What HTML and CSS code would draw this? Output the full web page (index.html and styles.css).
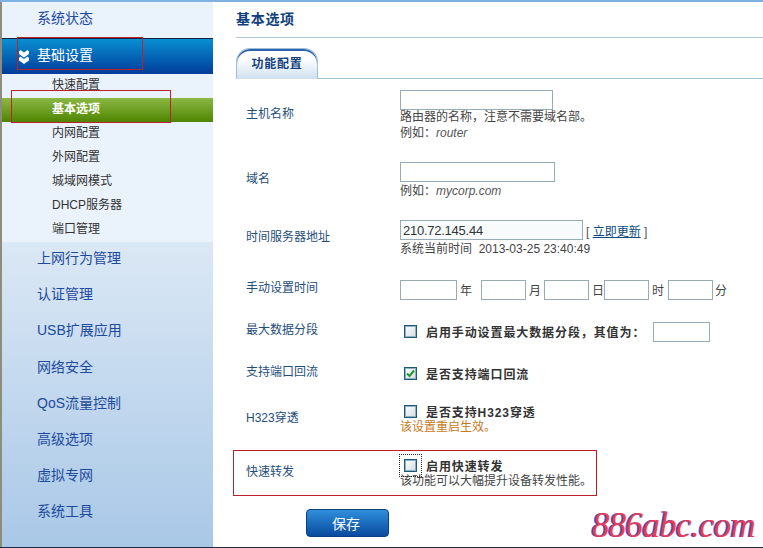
FILE: index.html
```html
<!DOCTYPE html>
<html lang="zh-CN">
<head>
    <meta charset="UTF-8">
    <title>基本选项</title>
    <link rel="stylesheet" href="styles.css">
</head>
<body>
    <div class="page">
        <div class="sidebar">
            <a class="nav-top">系统状态</a>
            <a class="nav-active">
                <svg class="chevrons" width="10" height="14" viewBox="0 0 10 14">
                    <path d="M0 1.5 1.5 0 5 2.5 8.500 0 10 1.500V4L5 7.500 0 4Z M0 8 1.500 6.500 5 9 8.500 6.500 10 8V10.500L5 14 0 10.500Z" fill="#fff"/>
                </svg>
                基础设置
            </a>
            <div class="subnav">
                <a>快速配置</a>
                <a class="current">基本选项</a>
                <a>内网配置</a>
                <a>外网配置</a>
                <a>城域网模式</a>
                <a>DHCP服务器</a>
                <a>端口管理</a>
            </div>
            <div class="groups">
                <a>上网行为管理</a>
                <a>认证管理</a>
                <a>USB扩展应用</a>
                <a>网络安全</a>
                <a>QoS流量控制</a>
                <a>高级选项</a>
                <a>虚拟专网</a>
                <a>系统工具</a>
            </div>
        </div>

        <div class="main">
            <h1>基本选项</h1>
            <div class="tabs"><span class="tab">功能配置</span></div>

            <form class="form">
                <div class="row row-host">
                    <label>主机名称</label>
                    <div>
                        <input class="input w153" type="text">
                        <div class="hint">路由器的名称，注意不需要域名部。</div>
                        <div class="hint">例如：<i>router</i></div>
                    </div>
                </div>
                <div class="row row-domain">
                    <label>域名</label>
                    <div>
                        <input class="input w155" type="text">
                        <div class="hint">例如：<i>mycorp.com</i></div>
                    </div>
                </div>
                <div class="row row-time">
                    <label>时间服务器地址</label>
                    <div>
                        <div class="line">
                            <input class="input w183 filled" type="text" value="210.72.145.44">
                            <span class="update">[ <a href="#">立即更新</a> ]</span>
                        </div>
                        <div class="hint">系统当前时间&nbsp; 2013-03-25 23:40:49</div>
                    </div>
                </div>
                <div class="row row-manual">
                    <label>手动设置时间</label>
                    <div class="line date">
                        <input class="input w57" type="text"><span class="unit u-year">年</span>
                        <input class="input w45" type="text"><span class="unit u-month">月</span>
                        <input class="input w45" type="text"><span class="unit u-day">日</span>
                        <input class="input w45" type="text"><span class="unit u-hour">时</span>
                        <input class="input w45" type="text"><span class="unit u-min">分</span>
                    </div>
                </div>
                <div class="row row-mss">
                    <label>最大数据分段</label>
                    <div class="line check">
                        <span class="box"></span>
                        <b>启用手动设置最大数据分段，其值为：</b>
                        <input class="input w57 mss" type="text">
                    </div>
                </div>
                <div class="row row-loop">
                    <label>支持端口回流</label>
                    <div class="line check">
                        <span class="box">
                            <svg width="9" height="9" viewBox="0 0 9 9"><path d="M1 4.500 3.500 7 8 1.500" fill="none" stroke="#1f9a2e" stroke-width="2"/></svg>
                        </span>
                        <b>是否支持端口回流</b>
                    </div>
                </div>
                <div class="row row-h323">
                    <label>H323穿透</label>
                    <div>
                        <div class="line check">
                            <span class="box"></span>
                            <b>是否支持H323穿透</b>
                        </div>
                        <div class="hint orange">该设置重启生效。</div>
                    </div>
                </div>
                <div class="row row-fast">
                    <label>快速转发</label>
                    <div>
                        <div class="line check">
                            <span class="box focused"></span>
                            <b>启用快速转发</b>
                        </div>
                        <div class="hint">该功能可以大幅提升设备转发性能。</div>
                    </div>
                </div>
                <button class="save" type="button">保存</button>
            </form>
        </div>

        <!-- red marks and watermark sit on top of the screenshot -->
        <div class="mark mark-nav"></div>
        <div class="mark mark-sub"></div>
        <div class="mark mark-row"></div>
        <div class="watermark">886abc.com</div>
    </div>
</body>
</html>
```

FILE: styles.css
```css
html, body {
    margin: 0;
    padding: 0;
}
body {
    font-family: "Liberation Sans", "Noto Sans CJK SC", sans-serif;
    font-size: 12px;
    color: #444;
    background-color: #fff;
}
.page {
    position: relative;
    display: flex;
    box-sizing: border-box;
    width: 763px;
    height: 548px;
    overflow: hidden;
    border-top: 2px solid #7fb2e2;
    border-bottom: 1px solid #1f2a44;
}

/* sidebar */
.sidebar {
    display: flex;
    flex-direction: column;
    flex: none;
    width: 211px;
    border-left: 2px solid #8e8c7c;
    background-color: #eaf2fb;
}
.sidebar a {
    display: block;
}
.nav-top {
    height: 36px;
    padding-left: 35px;
    font-size: 14px;
    line-height: 33px;
    color: #1d4a9c;
}
.nav-active {
    position: relative;
    height: 35px;
    padding-left: 35px;
    border-top: 1px solid #10243f;
    font-size: 14px;
    line-height: 32px;
    color: #fff;
    background: linear-gradient(#0a8fd2, #003c9a);
}
.chevrons {
    position: absolute;
    left: 17px;
    top: 11px;
}
.subnav a {
    height: 24px;
    padding-left: 50px;
    line-height: 23px;
    color: #333;
}
.subnav a.current {
    font-weight: bold;
    color: #fff;
    background: linear-gradient(#8cb845, #4f8500);
}
.groups {
    flex: 1;
    background: linear-gradient(#dbe8f5, #a9c8e7);
}
.groups a {
    height: 36.2px;
    padding-left: 35px;
    font-size: 14px;
    line-height: 33px;
    color: #1d4a9c;
}

/* main area */
.main {
    flex: 1;
    padding: 0 0 0 23px;
}
h1 {
    height: 35px;
    margin: 0;
    border-bottom: 1px solid #b4c6d8;
    font-size: 14px;
    line-height: 34px;
    letter-spacing: 0.7px;
    color: #10407c;
}
.tabs {
    display: flex;
    height: 30px;
    margin-top: 10px;
    border-bottom: 1px solid #a9c3d6;
}
.tab {
    box-sizing: border-box;
    width: 82px;
    height: 31px;
    border: 1px solid #9cc0da;
    border-bottom: none;
    border-radius: 14px 14px 0 0;
    box-shadow: inset 0 2px 0 #2c62ac;
    font-size: 12px;
    font-weight: bold;
    line-height: 30px;
    letter-spacing: 0.8px;
    text-align: center;
    color: #10407c;
    background: linear-gradient(#fff 30%, #cfe0ef);
}
.form {
    padding: 11px 0 0 10px;
}
.row {
    display: grid;
    grid-template-columns: 154px 1fr;
    align-items: center;
}
.row label {
    margin-bottom: 6px;
    color: #1f4e79;
}
.row-host { height: 49px; }
.row-domain { height: 35px; margin-top: 23px; }
.row-time { height: 36px; margin-top: 23px; }
.row-manual { height: 20px; margin-top: 22px; }
.row-mss { height: 20px; margin-top: 22px; }
.row-loop { height: 18px; margin-top: 22px; }
.row-h323 { height: 29px; margin-top: 23px; }
.row-fast { height: 32px; margin-top: 25px; }

.row-host .input + .hint { margin-top: -1px; }
.row-domain .hint, .row-time .hint { margin-top: 1px; }
.row-h323 .hint, .row-fast .hint { margin-top: -1px; }

.input {
    display: block;
    box-sizing: border-box;
    height: 20px;
    margin: 0;
    padding: 0 2px;
    border: 1px solid #98acb4;
    font-family: inherit;
    font-size: 13px;
    letter-spacing: -0.25px;
    color: #333;
    background-color: #fff;
}
.filled {
    background-color: #f8fbfc;
}
.w45 { width: 45px; }
.w57 { width: 57px; }
.w153 { width: 153px; }
.w155 { width: 155px; }
.w183 { width: 183px; }
.hint {
    height: 16px;
    line-height: 16px;
    white-space: nowrap;
}
.hint i {
    color: #555;
}
.orange {
    color: #c8791c;
}
.line {
    display: flex;
    align-items: center;
    white-space: nowrap;
}
.update {
    margin-left: 3px;
    color: #555;
}
.update a {
    color: #0b4a80;
}
.unit {
    margin-left: 3px;
}
.u-year { margin-right: 9px; }
.u-month { margin-right: 3px; }
.u-hour { margin-right: 4px; }
.u-min { margin-left: 2px; }
.check b {
    margin-left: 9px;
    letter-spacing: 0.9px;
    color: #333;
}
.box {
    position: relative;
    display: flex;
    align-items: center;
    justify-content: center;
    box-sizing: border-box;
    flex: none;
    width: 13px;
    height: 13px;
    margin-left: 4px;
    border: 1px solid #1d5a78;
    box-shadow: inset 0 0 0 1px #8fb0c0;
    background: linear-gradient(135deg, #fff, #d5dbde);
}
.box.focused::after {
    content: "";
    position: absolute;
    left: -6px;
    top: -6px;
    width: 21px;
    height: 21px;
    border: 1px dotted #222;
}
.mss {
    margin-left: 8px;
}
.save {
    display: block;
    box-sizing: border-box;
    width: 83px;
    height: 28px;
    margin: 20px 0 0 60px;
    padding: 0 3px 0 0;
    border: 1px solid #0a3f80;
    border-radius: 4px;
    font-family: inherit;
    font-size: 14px;
    color: #fff;
    background: linear-gradient(#2f8fdc, #0a4a9e);
}

/* annotations */
.mark {
    position: absolute;
    box-sizing: border-box;
    border: 1px solid #c0202c;
}
.mark-nav {
    left: 17px;
    top: 35px;
    width: 126px;
    height: 33px;
}
.mark-sub {
    left: 11px;
    top: 88px;
    width: 160px;
    height: 33px;
}
.mark-row {
    left: 233px;
    top: 448px;
    width: 364px;
    height: 46px;
    border-color: #b8202c;
}
.watermark {
    position: absolute;
    left: 592px;
    top: 505px;
    font-family: "Liberation Serif", serif;
    font-size: 35px;
    font-style: italic;
    line-height: 38px;
    letter-spacing: -0.7px;
    color: #f03c4a;
    text-shadow: -1.5px 0 0 #3b55e8;
}
```
